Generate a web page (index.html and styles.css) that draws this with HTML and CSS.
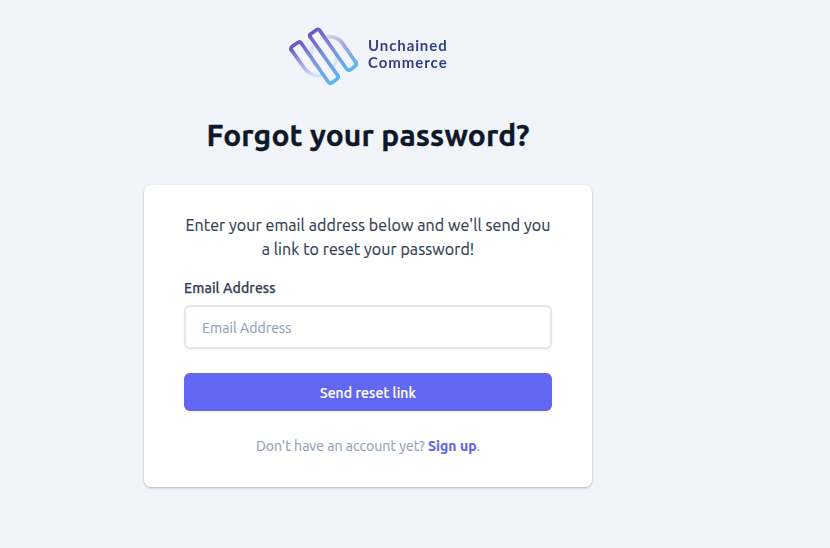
FILE: index.html
```html
<!DOCTYPE html>
<html lang="en">
<head>
<meta charset="utf-8">
<title>Forgot your password?</title>
<link rel="stylesheet" href="styles.css">
</head>
<body>
<main class="page">
  <div class="brand">
    <svg class="mark" viewBox="0 0 270 216" aria-hidden="true">
      <defs>
        <linearGradient id="a" gradientUnits="userSpaceOnUse" x1="85" y1="45" x2="170" y2="175"><stop stop-color="#7055c8"/><stop offset=".5" stop-color="#7d8fdd"/><stop offset="1" stop-color="#5fb4ef"/></linearGradient>
        <linearGradient id="b" gradientUnits="userSpaceOnUse" x1="100" y1="32" x2="205" y2="148"><stop stop-color="#7055c8"/><stop offset=".5" stop-color="#8090dd"/><stop offset="1" stop-color="#5fb4ef"/></linearGradient>
        <linearGradient id="c" gradientUnits="userSpaceOnUse" x1="33" y1="85" x2="100" y2="168"><stop stop-color="#7055c8"/><stop offset=".5" stop-color="#a09fe2"/><stop offset="1" stop-color="#cfe5f8"/></linearGradient>
        <linearGradient id="d" gradientUnits="userSpaceOnUse" x1="144" y1="48" x2="215" y2="148"><stop stop-color="#d6d2ef"/><stop offset=".4" stop-color="#a9a5e2"/><stop offset="1" stop-color="#5fb4ef"/></linearGradient>
        <linearGradient id="e" gradientUnits="userSpaceOnUse" x1="45" y1="70" x2="155" y2="185"><stop stop-color="#7055c8"/><stop offset=".5" stop-color="#8294de"/><stop offset="1" stop-color="#5fb4ef"/></linearGradient>
      </defs>
      <g fill="none" stroke-width="11" stroke-linecap="round" stroke-linejoin="round">
        <path stroke="#dbe2f4" d="M98 80Q86 108 103 132"/>
        <path stroke="#d5e7f8" d="M169 105Q173 126 158 141"/>
        <path stroke="url(#c)" d="M33 88L73 144Q92 170 121 167"/>
        <path stroke="url(#d)" d="M144 50Q174 48 190 73L228 128"/>
        <path stroke="url(#e)" d="M35 91Q30 84 37 79L55 67Q60 64 64 70L145 186Q149 192 155 188L171 177Q177 172 173 166"/>
        <path stroke="url(#a)" d="M173 166L91 51Q87 45 93 41"/>
        <path stroke="url(#b)" d="M91 51Q87 45 93 41L109 30Q115 26 119 31L200 147Q204 153 211 149L225 139Q231 134 228 128"/>
      </g>
    </svg>
    <div class="wordmark"><span class="w1">Unchained</span><span class="w2">Commerce</span></div>
  </div>
  <h1 class="title">Forgot your password?</h1>
  <form class="card">
    <p class="intro">Enter your email address below and we'll send you a link to reset your password!</p>
    <label class="label" for="email">Email Address</label>
    <input class="input" id="email" type="email" placeholder="Email Address">
    <button class="button" type="button">Send reset link</button>
    <p class="foot">Don't have an account yet? <a class="link">Sign up</a>.</p>
  </form>
</main>
</body>
</html>
```

FILE: styles.css
```css
*{box-sizing:border-box}
body{margin:0;min-height:100vh;background:#f1f5f9;font-family:Ubuntu,"Noto Sans",sans-serif;color:#334155}
.page{width:448px;min-height:100vh;margin-left:144px;padding-top:20px}
.brand{display:flex;height:72px;padding-left:136px}
.mark{width:90px;height:72px;flex:none}
.wordmark{margin:17px 0 0 -2px;font:700 15px/17px Lato,sans-serif;color:transparent;background:linear-gradient(90deg,#493487,#214086 80px);background-clip:text;-webkit-background-clip:text;height:38px}
.wordmark span{display:block;white-space:nowrap}
.w1{letter-spacing:.9px}
.w2{letter-spacing:.95px}
.title{margin:25px 0 0;height:36px;font-size:30px;line-height:36px;font-weight:700;text-align:center;color:#0f172a;white-space:nowrap;letter-spacing:.14px;-webkit-text-stroke:.35px}
.card{margin-top:32px;height:302px;padding:28px 40px;background:#fff;border-radius:7px;box-shadow:0 1px 3px rgba(0,0,0,.16),0 1px 2px rgba(0,0,0,.12)}
.intro{margin:0;font-size:16px;line-height:24px;text-align:center;letter-spacing:.1px;-webkit-text-stroke:.2px}
.label{display:block;margin-top:17px;font-size:14px;line-height:20px;font-weight:500;letter-spacing:.12px;-webkit-text-stroke:.25px}
.input{display:block;width:100%;height:44px;margin-top:7px;padding:2px 16px 0;border:2px solid #e2e8f0;border-radius:6px;background:#fff;box-shadow:0 1px 2px rgba(0,0,0,.05);font:14px/20px Ubuntu,"Noto Sans",sans-serif;letter-spacing:.1px}
.input::placeholder{color:#94a3b8;opacity:1;-webkit-text-stroke:.2px}
.button{display:block;width:100%;height:38px;margin-top:24px;padding:2px 0 0;border:0;border-radius:6px;background:#6366f1;color:#fff;box-shadow:0 1px 2px rgba(0,0,0,.05);font:500 14px/20px Ubuntu,"Noto Sans",sans-serif;letter-spacing:.1px;-webkit-text-stroke:.2px}
.foot{margin:25px 0 0;font-size:14px;line-height:20px;text-align:center;color:#94a3b8;letter-spacing:.05px;-webkit-text-stroke:.2px}
.link{font-weight:700;color:#6366f1}
```
